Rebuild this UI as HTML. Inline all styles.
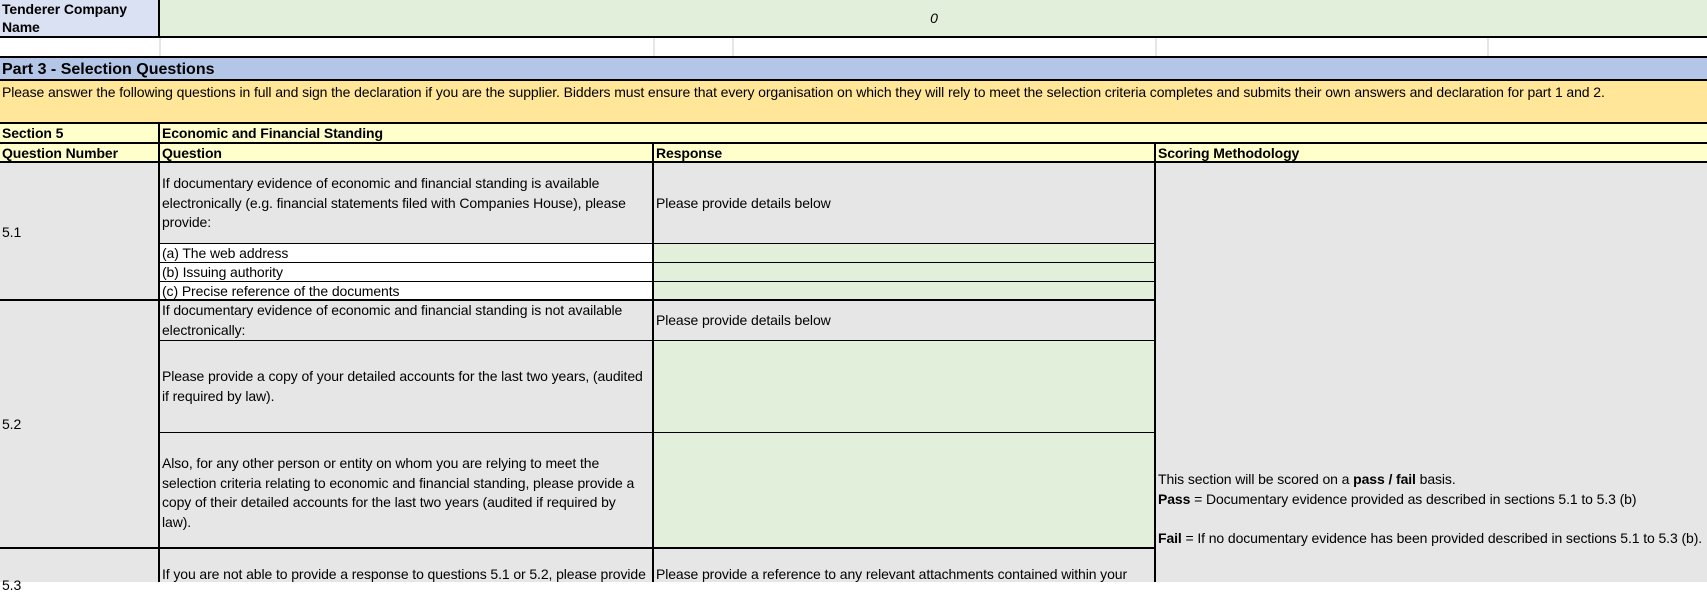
<!DOCTYPE html>
<html><head><style>
body{margin:0;width:1707px;height:582px;overflow:hidden;background:#fff;font-family:"Liberation Sans",sans-serif;font-size:14px;letter-spacing:-0.1px;color:#000;position:relative}
.c{position:absolute;box-sizing:border-box;overflow:hidden;line-height:19.5px;padding-left:2px}
.h{position:absolute;background:#000;height:2px}
.v{position:absolute;background:#000;width:2px}
.t{position:absolute;background:#000;height:1px}
b{font-weight:bold}
</style></head><body>
<div class="c" style="left:0;top:0;width:159px;height:37px;background:#d9e1f2;font-weight:bold;line-height:18px;padding-top:0">Tenderer Company<br>Name</div>
<div class="c" style="left:159px;top:0;width:1548px;height:37px;background:#e2efda;text-align:center;line-height:37px;font-style:italic">0</div>
<div class="h" style="left:0;top:36px;width:1707px"></div>
<div class="v" style="left:158px;top:0;height:37px"></div>
<div class="c" style="left:159px;top:38px;width:1px;height:19px;background:#e6e6e6"></div>
<div class="c" style="left:653px;top:38px;width:1px;height:19px;background:#e6e6e6"></div>
<div class="c" style="left:732px;top:38px;width:1px;height:19px;background:#e6e6e6"></div>
<div class="c" style="left:1155px;top:38px;width:1px;height:19px;background:#e6e6e6"></div>
<div class="c" style="left:1487px;top:38px;width:1px;height:19px;background:#e6e6e6"></div>
<div class="h" style="left:0;top:56px;width:1707px"></div>
<div class="c" style="left:0;top:58px;width:1707px;height:22px;background:#b4c6e7;font-weight:bold;font-size:16px;line-height:24px;letter-spacing:0">Part 3 - Selection Questions</div>
<div class="h" style="left:0;top:79px;width:1707px"></div>
<div class="c" style="left:0;top:81px;width:1707px;height:42px;background:#ffe699;line-height:22px">Please answer the following questions in full and sign the declaration if you are the supplier. Bidders must ensure that every organisation on which they will rely to meet the selection criteria completes and submits their own answers and declaration for part 1 and 2.</div>
<div class="h" style="left:0;top:122px;width:1707px"></div>
<div class="c" style="left:0;top:124px;width:1707px;height:38px;background:#ffffcc"></div>
<div class="c" style="left:0;top:124px;width:159px;height:20px;font-weight:bold">Section 5</div>
<div class="c" style="left:160px;top:124px;width:600px;height:20px;font-weight:bold">Economic and Financial Standing</div>
<div class="h" style="left:0;top:142px;width:1707px"></div>
<div class="c" style="left:0;top:144px;width:159px;height:19px;font-weight:bold">Question Number</div>
<div class="c" style="left:160px;top:144px;width:490px;height:19px;font-weight:bold">Question</div>
<div class="c" style="left:654px;top:144px;width:490px;height:19px;font-weight:bold">Response</div>
<div class="c" style="left:1156px;top:144px;width:490px;height:19px;font-weight:bold">Scoring Methodology</div>
<div class="h" style="left:0;top:161px;width:1707px"></div>
<div class="c" style="left:0;top:163px;width:1707px;height:419px;background:#e7e6e6"></div>
<div class="c" style="left:0;top:223px;width:159px;height:20px">5.1</div>
<div class="c" style="left:160px;top:174px;width:492px;height:70px">If documentary evidence of economic and financial standing is available electronically (e.g. financial statements filed with Companies House), please provide:</div>
<div class="c" style="left:654px;top:194px;width:490px;height:20px">Please provide details below</div>
<div class="c" style="left:160px;top:243px;width:493px;height:57px;background:#fff"></div>
<div class="c" style="left:654px;top:243px;width:501px;height:57px;background:#e2efda"></div>
<div class="c" style="left:160px;top:244px;width:490px;height:19px;line-height:19px">(a) The web address</div>
<div class="c" style="left:160px;top:263px;width:490px;height:19px;line-height:19px">(b) Issuing authority</div>
<div class="c" style="left:160px;top:282px;width:490px;height:19px;line-height:19px">(c) Precise reference of the documents</div>
<div class="t" style="left:159px;top:243px;width:996px"></div>
<div class="t" style="left:159px;top:262px;width:996px"></div>
<div class="t" style="left:159px;top:281px;width:996px"></div>
<div class="h" style="left:0;top:299px;width:1155px"></div>
<div class="c" style="left:0;top:415px;width:159px;height:20px">5.2</div>
<div class="c" style="left:160px;top:301px;width:492px;height:40px">If documentary evidence of economic and financial standing is not available electronically:</div>
<div class="c" style="left:654px;top:311px;width:490px;height:20px">Please provide details below</div>
<div class="t" style="left:159px;top:340px;width:996px"></div>
<div class="c" style="left:654px;top:341px;width:501px;height:206px;background:#e2efda"></div>
<div class="c" style="left:160px;top:367px;width:492px;height:40px">Please provide a copy of your detailed accounts for the last two years, (audited if required by law).</div>
<div class="t" style="left:159px;top:432px;width:996px"></div>
<div class="c" style="left:160px;top:454px;width:480px;height:80px">Also, for any other person or entity on whom you are relying to meet the selection criteria relating to economic and financial standing, please provide a copy of their detailed accounts for the last two years (audited if required by law).</div>
<div class="h" style="left:0;top:547px;width:1155px"></div>
<div class="c" style="left:0;top:576px;width:159px;height:20px">5.3</div>
<div class="c" style="left:160px;top:565px;width:492px;height:40px">If you are not able to provide a response to questions 5.1 or 5.2, please provide</div>
<div class="c" style="left:654px;top:565px;width:501px;height:40px">Please provide a reference to any relevant attachments contained within your</div>
<div class="c" style="left:1156px;top:470px;width:551px;height:20px">This section will be scored on a <b>pass / fail</b> basis.</div>
<div class="c" style="left:1156px;top:490px;width:551px;height:20px"><b>Pass</b> = Documentary evidence provided as described in sections 5.1 to 5.3 (b)</div>
<div class="c" style="left:1156px;top:529px;width:551px;height:20px"><b>Fail</b> = If no documentary evidence has been provided described in sections 5.1 to 5.3 (b).</div>
<div class="v" style="left:158px;top:123px;height:459px"></div>
<div class="v" style="left:652px;top:143px;height:439px"></div>
<div class="v" style="left:1154px;top:143px;height:439px"></div>
</body></html>
